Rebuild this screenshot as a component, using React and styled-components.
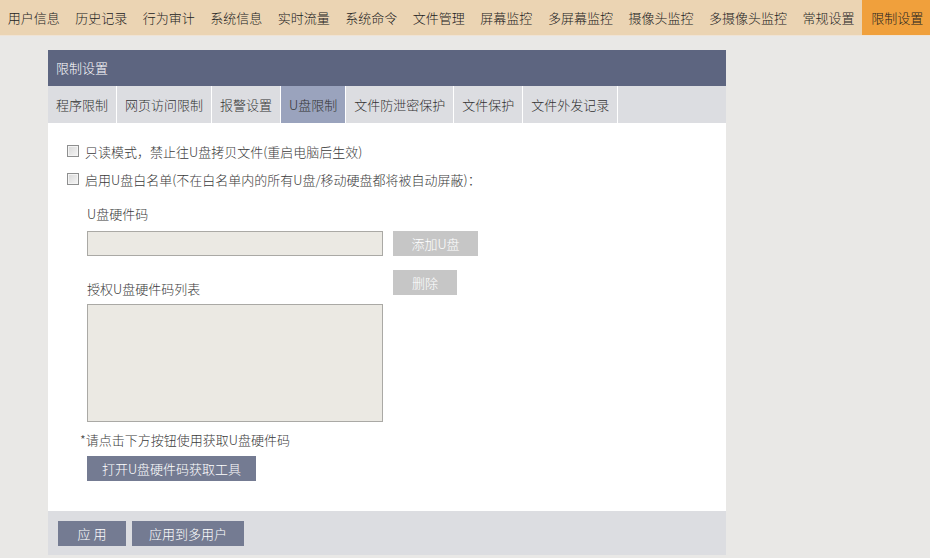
import styled, { createGlobalStyle } from "styled-components";

const GlobalStyle = createGlobalStyle`
  body {
    margin: 0;
    background: #e9e8e6;
    font-family: "Noto Sans CJK SC", "Liberation Sans", sans-serif;
    font-size: 13px;
    font-weight: 300;
    color: #3a3a3a;
  }
`;

const navItems = [
  "用户信息", "历史记录", "行为审计", "系统信息", "实时流量", "系统命令", "文件管理",
  "屏幕监控", "多屏幕监控", "摄像头监控", "多摄像头监控", "常规设置", "限制设置",
];

const tabs = ["程序限制", "网页访问限制", "报警设置", "U盘限制", "文件防泄密保护", "文件保护", "文件外发记录"];

export default function App() {
  return (
    <>
      <GlobalStyle />
      <NavBar>
        {navItems.map((t) => (
          <NavItem key={t} $active={t === "限制设置"}>{t}</NavItem>
        ))}
      </NavBar>
      <Main>
        <Panel>
          <PanelHeader>限制设置</PanelHeader>
          <TabBar>
            {tabs.map((t) => (
              <Tab key={t} $active={t === "U盘限制"}>{t}</Tab>
            ))}
          </TabBar>
          <Content>
            <CheckRow>
              <Check type="checkbox" />
              <span>只读模式，禁止往U盘拷贝文件(重启电脑后生效)</span>
            </CheckRow>
            <CheckRow>
              <Check type="checkbox" />
              <span>启用U盘白名单(不在白名单内的所有U盘/移动硬盘都将被自动屏蔽)：</span>
            </CheckRow>
            <FormBlock>
              <Label>U盘硬件码</Label>
              <InputRow>
                <TextInput />
                <GreyButton $width={85}>添加U盘</GreyButton>
              </InputRow>
              <ListRow>
                <ListColumn>
                  <Label $top={9} $bottom={5}>授权U盘硬件码列表</Label>
                  <ListBox />
                </ListColumn>
                <GreyButton $width={64}>删除</GreyButton>
              </ListRow>
            </FormBlock>
            <Note>*请点击下方按钮使用获取U盘硬件码</Note>
            <ToolButton>打开U盘硬件码获取工具</ToolButton>
          </Content>
          <Footer>
            <SlateButton $width={68}>应 用</SlateButton>
            <SlateButton $width={112}>应用到多用户</SlateButton>
          </Footer>
        </Panel>
      </Main>
    </>
  );
}

const NavBar = styled.div`
  display: flex;
  height: 35px;
  overflow: hidden;
  background: #ebd4b3;
  border-bottom: 1px solid #efe3d5;
`;

const NavItem = styled.div`
  padding: 0 7.75px;
  line-height: 35px;
  white-space: nowrap;
  color: #222;
  background: ${(p) => (p.$active ? "#f0a03c" : "transparent")};
  ${(p) => p.$active && "flex: 1; padding-left: 9px;"}
`;

const Main = styled.div`
  padding: 14px 0 0 48px;
`;

const Panel = styled.div`
  width: 678px;
`;

const PanelHeader = styled.div`
  height: 36px;
  line-height: 36px;
  padding: 0 8px;
  background: #5d6580;
  color: #fff;
`;

const TabBar = styled.div`
  display: flex;
  height: 37px;
  background: #dcdde1;
`;

const Tab = styled.div`
  padding: 0 8px;
  line-height: 37px;
  border-right: 1px solid #fff;
  white-space: nowrap;
  color: #333;
  background: ${(p) => (p.$active ? "#9aa3bd" : "transparent")};
`;

const Content = styled.div`
  height: 388px;
  box-sizing: border-box;
  padding: 14px 0 0 18px;
  background: #fff;
`;

const CheckRow = styled.label`
  display: flex;
  align-items: center;
  gap: 6px;
  height: 28px;
`;

const Check = styled.input`
  appearance: none;
  margin: 0 0 0 1px;
  width: 12px;
  height: 12px;
  border: 1px solid #8e8f8f;
  background: linear-gradient(135deg, #d8d8d8, #f6f6f6);
  box-shadow: inset 0 0 0 1px #f4f4f4;
`;

const FormBlock = styled.div`
  margin: 11px 0 0 21px;
`;

const Label = styled.div`
  line-height: 20px;
  margin: ${(p) => p.$top || 0}px 0 ${(p) => p.$bottom ?? 7}px;
`;

const InputRow = styled.div`
  display: flex;
  gap: 10px;
`;

const TextInput = styled.input`
  box-sizing: border-box;
  width: 296px;
  height: 25px;
  margin: 0;
  border: 1px solid #aaa9a5;
  background: #ebe9e3;
`;

const GreyButton = styled.div`
  width: ${(p) => p.$width}px;
  height: 25px;
  line-height: 25px;
  text-align: center;
  background: #c6c6c6;
  color: #fff;
`;

const ListRow = styled.div`
  display: flex;
  align-items: flex-start;
  gap: 10px;
  margin-top: 14px;
`;

const ListColumn = styled.div`
  width: 296px;
`;

const ListBox = styled.div`
  box-sizing: border-box;
  height: 118px;
  border: 1px solid #aaa9a5;
  background: #ebe9e3;
`;

const Note = styled.div`
  margin: 8px 0 0 14px;
  line-height: 20px;
`;

const ToolButton = styled.div`
  width: 169px;
  height: 25px;
  line-height: 25px;
  margin: 6px 0 0 21px;
  text-align: center;
  background: #747b92;
  color: #fff;
`;

const Footer = styled.div`
  display: flex;
  gap: 6px;
  height: 44px;
  box-sizing: border-box;
  padding: 10px 10px;
  background: #dcdde1;
`;

const SlateButton = styled.div`
  width: ${(p) => p.$width}px;
  height: 25px;
  line-height: 25px;
  text-align: center;
  background: #747b92;
  color: #fff;
`;
